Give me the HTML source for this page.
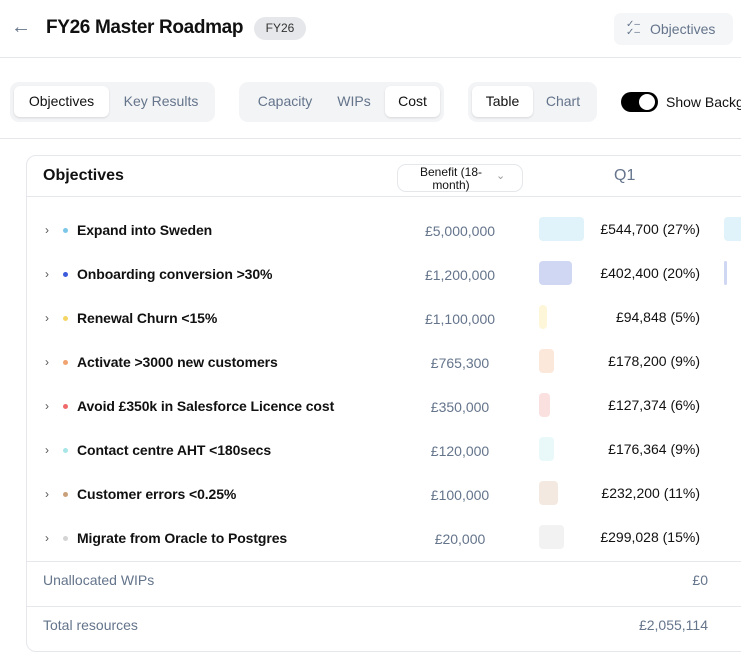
<!DOCTYPE html>
<html><head><style>
*{box-sizing:border-box;margin:0;padding:0}
body{width:741px;height:667px;overflow:hidden;background:#fff;font-family:"Liberation Sans",sans-serif;position:relative;color:#111}
.a{position:absolute;white-space:nowrap}
.seg{position:absolute;top:82px;height:40px;background:#f3f4f6;border-radius:9px}
.btn{position:absolute;top:4px;height:31px;line-height:31px;font-size:14px;color:#64748b;text-align:center}
.on{background:#fff;border-radius:6px;color:#111;box-shadow:0 1px 2px rgba(0,0,0,.12)}
.row{position:absolute;left:0;width:741px;height:44px}
.chev{position:absolute;left:45px;top:14px;font-size:12px;color:#555}
.dot{position:absolute;left:63px;top:19px;width:5px;height:5px;border-radius:50%}
.nm{position:absolute;left:77px;top:13px;font-size:14px;font-weight:bold;color:#111;letter-spacing:-0.1px}
.ben{position:absolute;left:400px;width:120px;text-align:center;top:14px;font-size:14px;color:#64748b}
.bar{position:absolute;left:539px;top:8px;height:24px;border-radius:4px}
.q{position:absolute;right:41px;top:12px;font-size:14px;color:#111}
</style></head><body>
<div class="a" style="left:11px;top:16px;font-size:20px;color:#64748b">&#8592;</div>
<div class="a" style="left:46px;top:17px;font-size:19px;font-weight:bold;letter-spacing:-0.35px">FY26 Master Roadmap</div>
<div class="a" style="left:254px;top:17px;width:52px;height:23px;background:#e5e7eb;border-radius:12px;font-size:12px;line-height:23px;text-align:center;color:#333">FY26</div>
<div class="a" style="left:614px;top:13px;width:119px;height:32px;background:#f5f6f8;border-radius:7px;font-size:14px;line-height:32px;color:#64748b;padding-left:36px">Objectives</div>
<div class="a" style="left:626px;top:21px;font-size:10px;color:#64748b;line-height:8px">✓–<br>✓–</div>
<div class="a" style="left:0;top:57px;width:741px;height:1px;background:#e5e7eb"></div>

<div class="seg" style="left:10px;width:205px">
<div class="btn on" style="left:4px;width:95px">Objectives</div>
<div class="btn" style="left:103px;width:96px">Key Results</div></div>
<div class="seg" style="left:239px;width:205px">
<div class="btn" style="left:8px;width:76px">Capacity</div>
<div class="btn" style="left:90px;width:50px">WIPs</div>
<div class="btn on" style="left:146px;width:55px">Cost</div></div>
<div class="seg" style="left:468px;width:129px">
<div class="btn on" style="left:4px;width:61px">Table</div>
<div class="btn" style="left:67px;width:56px">Chart</div></div>
<div class="a" style="left:621px;top:92px;width:37px;height:20px;background:#000;border-radius:10px"></div>
<div class="a" style="left:639px;top:94px;width:16px;height:16px;background:#fff;border-radius:50%"></div>
<div class="a" style="left:666px;top:94px;font-size:14px">Show Backgr</div>
<div class="a" style="left:0;top:138px;width:741px;height:1px;background:#e5e7eb"></div>

<div class="a" style="left:26px;top:155px;width:740px;height:497px;border:1px solid #e5e7eb;border-radius:10px"></div>
<div class="a" style="left:27px;top:196px;width:714px;height:1px;background:#e5e7eb"></div>
<div class="a" style="left:43px;top:167px;font-size:16px;font-weight:bold">Objectives</div>
<div class="a" style="left:397px;top:164px;width:126px;height:28px;border:1px solid #e5e7eb;border-radius:9px;font-size:12px;line-height:13px;text-align:center;padding-top:1px;padding-right:18px">Benefit (18-<br>month)</div>
<div class="a" style="left:496px;top:169px;font-size:11px;color:#999">&#8964;</div>
<div class="a" style="left:614px;top:167px;font-size:16px;color:#64748b">Q1</div>

<div class="row" style="top:209px"><span class="chev">›</span><span class="dot" style="background:#7cc6e8"></span><span class="nm">Expand into Sweden</span><span class="ben">£5,000,000</span><span class="bar" style="width:45px;background:#e0f2fa"></span><span class="q">£544,700 (27%)</span><span class="bar" style="left:724px;width:30px;background:#e0f2fa"></span></div>
<div class="row" style="top:253px"><span class="chev">›</span><span class="dot" style="background:#3b5bdb"></span><span class="nm">Onboarding conversion &gt;30%</span><span class="ben">£1,200,000</span><span class="bar" style="width:33px;background:#cfd7f3"></span><span class="q">£402,400 (20%)</span><span class="bar" style="left:724px;width:3px;background:#cfd7f3"></span></div>
<div class="row" style="top:297px"><span class="chev">›</span><span class="dot" style="background:#f5d565"></span><span class="nm">Renewal Churn &lt;15%</span><span class="ben">£1,100,000</span><span class="bar" style="width:8px;background:#fdf6d8"></span><span class="q">£94,848 (5%)</span></div>
<div class="row" style="top:341px"><span class="chev">›</span><span class="dot" style="background:#f0a470"></span><span class="nm">Activate &gt;3000 new customers</span><span class="ben">£765,300</span><span class="bar" style="width:15px;background:#fbe8da"></span><span class="q">£178,200 (9%)</span></div>
<div class="row" style="top:385px"><span class="chev">›</span><span class="dot" style="background:#ef6b6b"></span><span class="nm">Avoid £350k in Salesforce Licence cost</span><span class="ben">£350,000</span><span class="bar" style="width:11px;background:#fbe0e0"></span><span class="q">£127,374 (6%)</span></div>
<div class="row" style="top:429px"><span class="chev">›</span><span class="dot" style="background:#a8e6e8"></span><span class="nm">Contact centre AHT &lt;180secs</span><span class="ben">£120,000</span><span class="bar" style="width:15px;background:#e9f9f9"></span><span class="q">£176,364 (9%)</span></div>
<div class="row" style="top:473px"><span class="chev">›</span><span class="dot" style="background:#c9a07a"></span><span class="nm">Customer errors &lt;0.25%</span><span class="ben">£100,000</span><span class="bar" style="width:19px;background:#f3e9e0"></span><span class="q">£232,200 (11%)</span></div>
<div class="row" style="top:517px"><span class="chev">›</span><span class="dot" style="background:#d4d4d4"></span><span class="nm">Migrate from Oracle to Postgres</span><span class="ben">£20,000</span><span class="bar" style="width:25px;background:#f2f2f2"></span><span class="q">£299,028 (15%)</span></div>

<div class="a" style="left:27px;top:561px;width:714px;height:1px;background:#e5e7eb"></div>
<div class="a" style="left:43px;top:572px;font-size:14px;color:#64748b">Unallocated WIPs</div>
<div class="a" style="right:33px;top:572px;font-size:14px;color:#64748b">£0</div>
<div class="a" style="left:27px;top:606px;width:714px;height:1px;background:#e5e7eb"></div>
<div class="a" style="left:43px;top:617px;font-size:14px;color:#64748b">Total resources</div>
<div class="a" style="right:33px;top:617px;font-size:14px;color:#64748b">£2,055,114</div>
</body></html>
